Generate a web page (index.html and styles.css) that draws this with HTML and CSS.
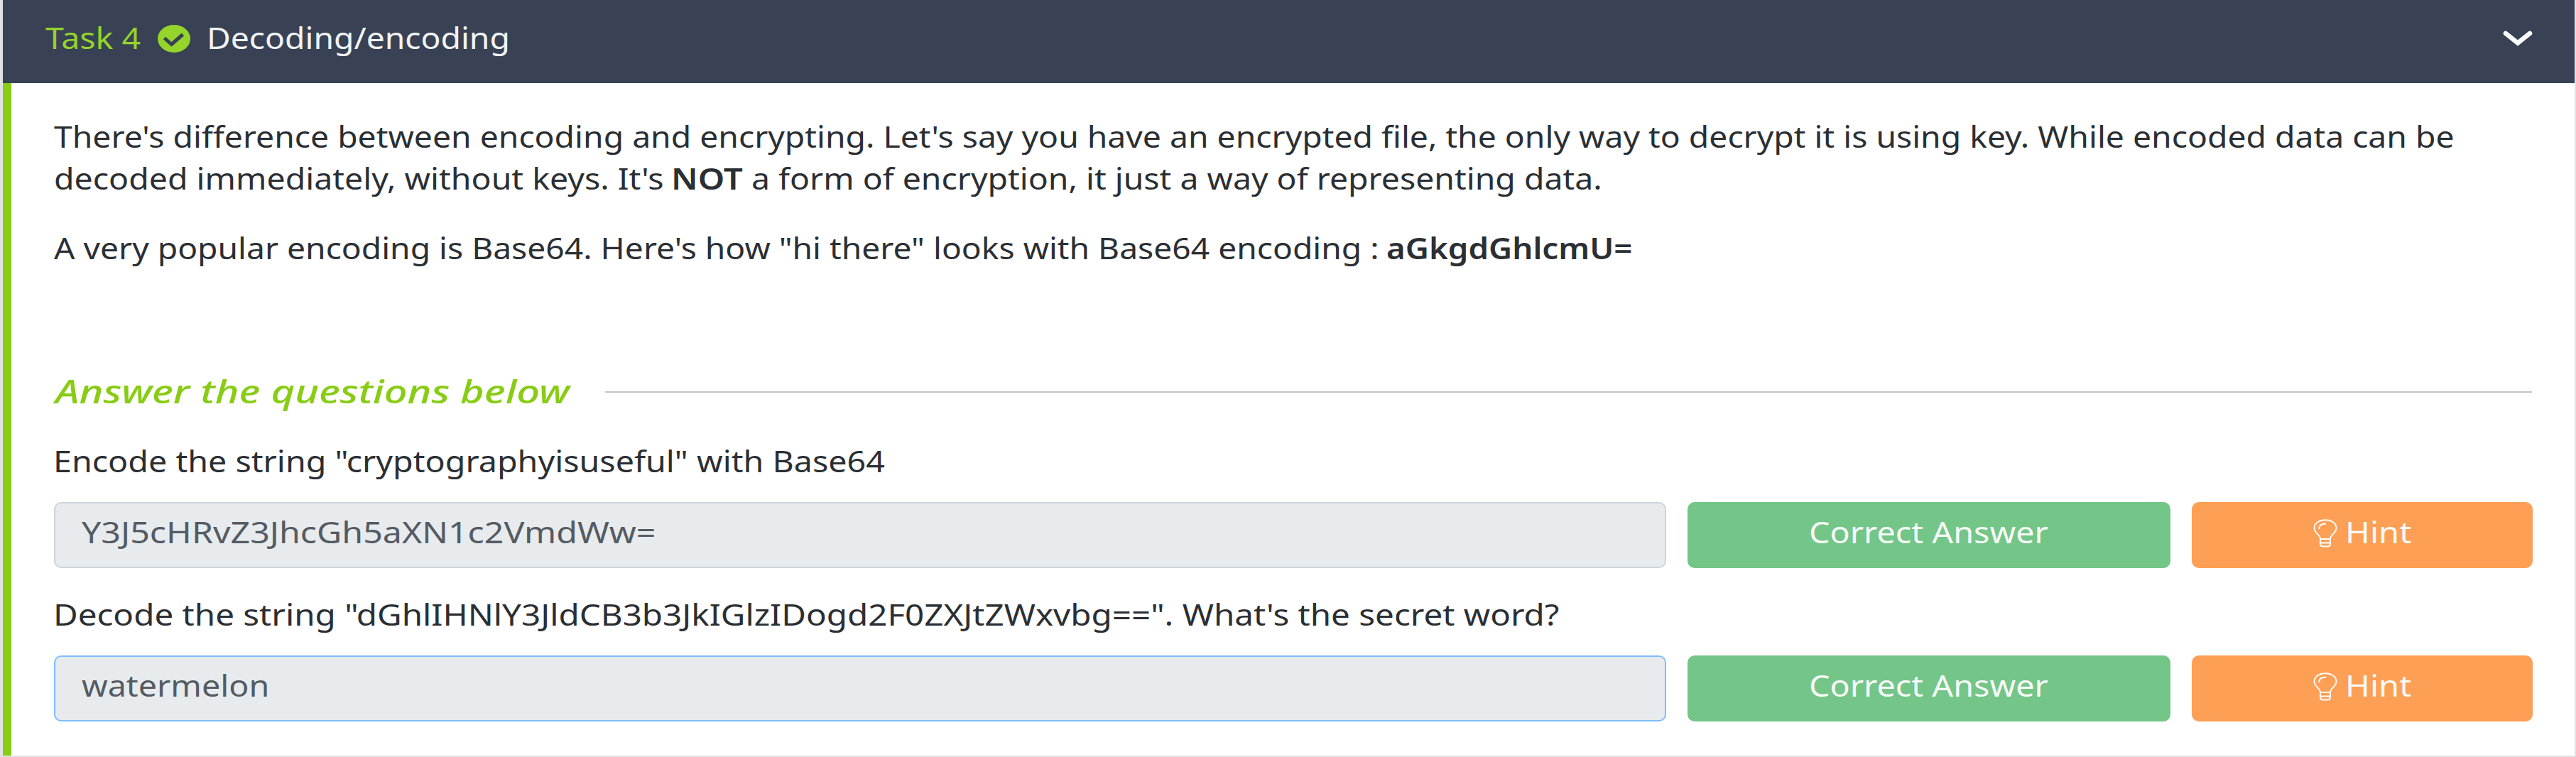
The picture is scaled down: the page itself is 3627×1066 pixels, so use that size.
FILE: index.html
```html
<!DOCTYPE html>
<html lang="en">
<head>
<meta charset="utf-8">
<title>Task 4 - Decoding/encoding</title>
<link rel="stylesheet" href="styles.css">
</head>
<body>
<article class="task">
  <header class="task-header">
    <span class="wide task-number">Task 4</span>
    <svg class="check" viewBox="0 0 46 39" preserveAspectRatio="none"><ellipse cx="23" cy="19.5" rx="23" ry="19.5" fill="#94d42b"/><path d="M9.5 18.5 19.5 27.5 35.5 13.5" fill="none" stroke="#384254" stroke-width="5"/></svg>
    <h1 class="wide task-title">Decoding/encoding</h1>
    <svg class="chevron" viewBox="0 0 42 22"><path d="M4 4 21 17.500 38 4" fill="none" stroke="#fff" stroke-width="6.5" stroke-linecap="round"/></svg>
  </header>
  <div class="task-body">
    <p class="intro"><span class="wide intro-a">There's difference between encoding and encrypting. Let's say you have an encrypted file, the only way to decrypt it is using key. While encoded data can be</span><br><span class="wide intro-b">decoded immediately, without keys. It's</span><strong class="wide intro-not">NOT</strong><span class="wide intro-c">a form of encryption, it just a way of representing data.</span></p>
    <p class="example"><span class="wide example-text">A very popular encoding is Base64. Here's how "hi there" looks with Base64 encoding :</span><strong class="wide example-code">aGkgdGhlcmU=</strong></p>
    <div class="section-title"><h2 class="wide">Answer the questions below</h2><hr></div>

    <section class="question">
      <p><span class="wide q-encode">Encode the string "cryptographyisuseful" with Base64</span></p>
      <div class="row">
        <div class="answer"><span class="wide a-encode">Y3J5cHRvZ3JhcGh5aXN1c2VmdWw=</span></div>
        <button class="btn correct"><span class="wide">Correct Answer</span></button>
        <button class="btn hint">
          <svg class="bulb" viewBox="0 0 34 40"><path d="M10 28C10 22 1.5 20 1.5 12.5 1.5 6 8 1.2 17 1.2S32.500 6 32.500 12.500C32.500 20 24 22 24 28M8 14C8 9 12 6.500 18 6.500" fill="none" stroke="#fff" stroke-width="1.9"/><path d="M10 28H24V35Q24 38.500 20 38.500H14Q10 38.500 10 35ZM10 33.500H24" fill="none" stroke="#fff" stroke-width="2"/></svg>
          <span class="wide">Hint</span>
        </button>
      </div>
    </section>

    <section class="question">
      <p><span class="wide q-decode">Decode the string "dGhlIHNlY3JldCB3b3JkIGlzIDogd2F0ZXJtZWxvbg==". What's the secret word?</span></p>
      <div class="row">
        <div class="answer focused"><span class="wide a-decode">watermelon</span></div>
        <button class="btn correct"><span class="wide">Correct Answer</span></button>
        <button class="btn hint">
          <svg class="bulb" viewBox="0 0 34 40"><path d="M10 28C10 22 1.5 20 1.5 12.5 1.5 6 8 1.2 17 1.2S32.500 6 32.500 12.500C32.500 20 24 22 24 28M8 14C8 9 12 6.500 18 6.500" fill="none" stroke="#fff" stroke-width="1.9"/><path d="M10 28H24V35Q24 38.500 20 38.500H14Q10 38.500 10 35ZM10 33.500H24" fill="none" stroke="#fff" stroke-width="2"/></svg>
          <span class="wide">Hint</span>
        </button>
      </div>
    </section>
  </div>
</article>
</body>
</html>
```
FILE: styles.css
```css
* { box-sizing: border-box; }

body {
  margin: 0;
  background: #fff;
  color: #2b2f34;
  font: 41px/59px "Noto Sans", sans-serif;
  overflow: hidden;
}

h1, h2, p { margin: 0; font-size: inherit; font-weight: 400; }
strong { font-weight: 600; }

/* Horizontally expanded lettering */
.wide {
  display: inline-block;
  white-space: nowrap;
  transform: scaleX(var(--sx, 1.135));
  transform-origin: 0 50%;
}

.task {
  height: 1066px;
  padding: 0 2px 2px 4px;
  background: #e2e2e4;
}

.task-header {
  display: flex;
  align-items: flex-start;
  height: 117px;
  padding: 24px 59px 0 60px;
  background: #384254;
  color: #f2f3f5;
}
.task-number { width: 158px; color: #94d42b; }
.check { width: 46px; height: 39px; margin-top: 10.500px; }
.task-title { --sx: 1.128; margin-left: 23px; }
.chevron { width: 42px; height: 22px; margin: 18.500px 0 0 auto; }

.task-body {
  height: 947px;
  padding: 46px 60px 0 60px;
  border-left: 12px solid #88cc14;
  background: #fff;
}

.intro-a { --sx: 1.129; }
.intro-b { --sx: 1.133; margin-left: -0.500px; }
.intro-not { --sx: 1.160; margin-left: 112px; }
.intro-c { --sx: 1.131; margin-left: 26px; }

.example { margin-top: 38.500px; }
.example-text { --sx: 1.127; }
.example-code { --sx: 1.115; margin-left: 221px; }

.section-title {
  display: flex;
  align-items: center;
  margin-top: 142px;
  color: #88cc14;
}
.section-title h2 {
  --sx: 1.284;
  width: 774px;
  margin-left: 2px;
  font-size: 45px;
  font-style: italic;
  font-weight: 500;
}
.section-title hr {
  flex: 1;
  height: 2px;
  margin: 3px 0 0;
  border: 0;
  background: #c4c4c4;
}

.question { margin-top: 40px; }
.question + .question { margin-top: 35.500px; }
.q-encode { --sx: 1.137; margin-left: -1px; }
.q-decode { --sx: 1.160; margin-left: -1px; }

.row {
  display: grid;
  grid-template-columns: 2270px 680px 480px;
  gap: 30px;
  height: 93px;
  margin-top: 28.500px;
}

.answer {
  padding: 11px 37px;
  border: 2px solid #cdd4da;
  border-radius: 10px;
  background: #e7ebee;
  color: #555b62;
}
.answer.focused { border-color: #80bdff; }
.a-encode { --sx: 1.179; }
.a-decode { --sx: 1.138; }

.btn {
  display: flex;
  align-items: flex-start;
  padding: 13px 0 0;
  border: 0;
  border-radius: 10px;
  color: #f8faf8;
  font: inherit;
}
.correct { background: #73c687; padding-left: 171px; }
.correct .wide { --sx: 1.140; }
.hint { background: #fda055; padding-left: 171px; }
.hint .wide { --sx: 1.150; }
.bulb { width: 34px; height: 40px; margin: 11px 11px 0 0; }
```
